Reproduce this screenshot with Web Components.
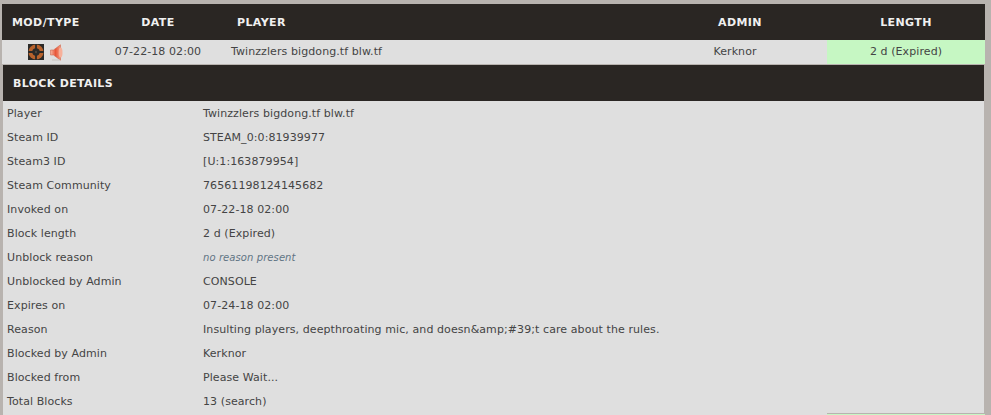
<!DOCTYPE html>
<html>
<head>
<meta charset="utf-8">
<title>Block details</title>
<style>
html, body { margin: 0; height: 100%; overflow: hidden; }
body { background: #b8b3af; font: 11px "DejaVu Sans", Verdana, sans-serif; letter-spacing: 0.085px; color: #444; padding-top: 4px; box-sizing: border-box; }
</style>
</head>
<body>
<block-list>
  <block-head></block-head>
  <block-row player="Twinzzlers bigdong.tf blw.tf" date="07-22-18 02:00" admin="Kerknor" length="2 d (Expired)"></block-row>
  <block-details>
    <detail-row label="Player">Twinzzlers bigdong.tf blw.tf</detail-row>
    <detail-row label="Steam ID">STEAM_0:0:81939977</detail-row>
    <detail-row label="Steam3 ID">[U:1:163879954]</detail-row>
    <detail-row label="Steam Community">76561198124145682</detail-row>
    <detail-row label="Invoked on">07-22-18 02:00</detail-row>
    <detail-row label="Block length">2 d (Expired)</detail-row>
    <detail-row label="Unblock reason"><i style="color:#5f7484;font-size:10px">no reason present</i></detail-row>
    <detail-row label="Unblocked by Admin">CONSOLE</detail-row>
    <detail-row label="Expires on">07-24-18 02:00</detail-row>
    <detail-row label="Reason">Insulting players, deepthroating mic, and doesn&amp;amp;#39;t care about the rules.</detail-row>
    <detail-row label="Blocked by Admin">Kerknor</detail-row>
    <detail-row label="Blocked from">Please Wait...</detail-row>
    <detail-row label="Total Blocks">13 (search)</detail-row>
  </block-details>
  <block-foot></block-foot>
</block-list>
<script>
class BlockList extends HTMLElement {
    connectedCallback() {
        let root = this.attachShadow({ mode: 'open' });
        root.innerHTML = `
    <style>
    :host{ display: block; width: 983px; margin-left: 2px; }
    </style>
    <slot></slot>`;
    }
}

class BlockHead extends HTMLElement {
    connectedCallback() {
        let root = this.attachShadow({ mode: 'open' });
        root.innerHTML = `
    <style>
    :host{
        display: grid;
        grid-template-columns: 97px 118px 450px 160px 158px;
        height: 36px;
        align-items: center;
        background: #2a2623;
        color: #f0f0f0;
        font-weight: bold;
        font-size: 11px;
        letter-spacing: 0.4px;
    }
    div{ text-align: center; }
    .left{ text-align: left; padding-left: 10px; }
    .player{ text-align: left; padding-left: 20px; }
    .admin{ padding-right: 14px; }
    </style>
    <div class="left">MOD/TYPE</div>
    <div>DATE</div>
    <div class="player">PLAYER</div>
    <div class="admin">ADMIN</div>
    <div>LENGTH</div>`;
    }
}

class BlockRow extends HTMLElement {
    connectedCallback() {
        let root = this.attachShadow({ mode: 'open' });
        root.innerHTML = `
    <style>
    :host{
        display: grid;
        grid-template-columns: 97px 118px 440px 170px 158px;
        height: 24px;
        align-items: center;
        background: #dfdfdf;
    }
    div{ text-align: center; line-height: 24px; }
    .icons{ display: flex; align-items: center; gap: 6px; padding-left: 26px; height: 24px; }
    .player{ text-align: left; padding-left: 14px; }
    .admin{ padding-right: 14px; }
    .len{ background: #c6f7c3; }
    svg{ display: block; }
    </style>
    <div class="icons">
        <svg width="16" height="16" viewBox="0 0 16 16">
            <rect width="16" height="16" fill="#2b2a28"/>
            <circle cx="8" cy="8" r="7.6" fill="#b8622c"/>
            <path d="M8 0v16M0 8h16" stroke="#2b2a28" stroke-width="1.8"/>
            <circle cx="8" cy="8" r="3.7" fill="#2b2a28"/>
            <circle cx="8" cy="8" r="1.2" fill="#4d463e"/>
        </svg>
        <svg width="13" height="17" viewBox="0 0 13 17">
            <defs>
                <linearGradient id="cone" x1="0" x2="1" y1="0" y2="0">
                    <stop offset="0" stop-color="#f6b7a2"/>
                    <stop offset="0.5" stop-color="#e8573a"/>
                    <stop offset="1" stop-color="#f4987c"/>
                </linearGradient>
            </defs>
            <path d="M0.5 6h3l7-5.2v15.4l-7-5.2h-3z" fill="url(#cone)" stroke="#cf6a50" stroke-width="0.6"/>
            <ellipse cx="10.6" cy="8.5" rx="1.9" ry="5" fill="#f7b09a"/>
            <path d="M2 16h8" stroke="#c9c3c0" stroke-width="1"/>
        </svg>
    </div>
    <div class="date"></div>
    <div class="player"></div>
    <div class="admin"></div>
    <div class="len"></div>`;
        root.querySelector('.date').textContent = this.getAttribute('date');
        root.querySelector('.player').textContent = this.getAttribute('player');
        root.querySelector('.admin').textContent = this.getAttribute('admin');
        root.querySelector('.len').textContent = this.getAttribute('length');
    }
}

class BlockDetails extends HTMLElement {
    connectedCallback() {
        let root = this.attachShadow({ mode: 'open' });
        root.innerHTML = `
    <style>
    :host{
        display: block;
        margin: 1px 1px 0 1px;
        background: #dfdfdf;
    }
    h4{
        margin: 0;
        height: 36px;
        line-height: 38px;
        padding-left: 10px;
        background: #2a2623;
        color: #f0f0f0;
        font-size: 11px;
        font-weight: bold;
        letter-spacing: 0.33px;
    }
    </style>
    <h4>BLOCK DETAILS</h4>
    <slot></slot>`;
    }
}

class DetailRow extends HTMLElement {
    connectedCallback() {
        let root = this.attachShadow({ mode: 'open' });
        root.innerHTML = `
    <style>
    :host{
        display: grid;
        grid-template-columns: 200px 1fr;
        height: 24px;
        line-height: 25px;
    }
    .label{ padding-left: 4px; }
    </style>
    <div class="label"></div>
    <div><slot></slot></div>`;
        root.querySelector('.label').textContent = this.getAttribute('label');
    }
}

class BlockFoot extends HTMLElement {
    connectedCallback() {
        let root = this.attachShadow({ mode: 'open' });
        root.innerHTML = `
    <style>
    :host{
        display: grid;
        grid-template-columns: 825px 158px;
        height: 2px;
    }
    .a{ background: #dfdfdf; margin-left: 1px; }
    .b{ background: #c6f7c3; margin-top: 1px; }
    </style>
    <div class="a"></div>
    <div class="b"></div>`;
    }
}

window.customElements.define('block-list', BlockList);
window.customElements.define('block-head', BlockHead);
window.customElements.define('block-row', BlockRow);
window.customElements.define('block-details', BlockDetails);
window.customElements.define('detail-row', DetailRow);
window.customElements.define('block-foot', BlockFoot);
</script>
</body>
</html>
